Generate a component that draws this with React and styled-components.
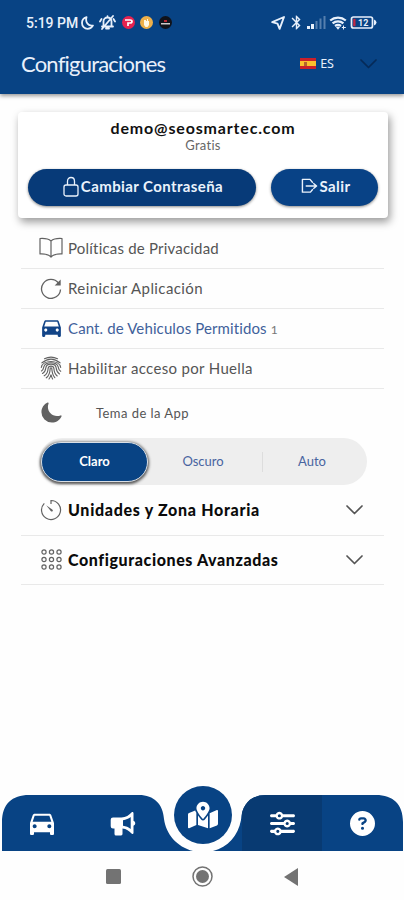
import React from 'react';
import styled, { createGlobalStyle, css } from 'styled-components';
import { MdBluetooth, MdDirectionsCar } from 'react-icons/md';
import { FaMapMarkedAlt } from 'react-icons/fa';
import { FaSliders, FaCircleQuestion } from 'react-icons/fa6';
import { IoMoon } from 'react-icons/io5';

const GlobalStyle = createGlobalStyle`
* { box-sizing: border-box; }
body {
    margin: 0;
    background: #fefefe;
    font-family: Lato, sans-serif;
    font-variant-ligatures: none;
}
button { font-family: inherit; border: 0; padding: 0; background: none; }
svg { display: block; flex-shrink: 0; }
`

const Phone = styled.div`
width:404px;
height:900px;
display:flex;
flex-direction:column;
overflow:hidden;
`

const Header = styled.header`
height:94px;
flex-shrink:0;
padding-top:12px;
background:#084384;
color:#e8f0fb;
box-shadow:0 2px 4px #0006;
`

const StatusBar = styled.div`
height:21px;
padding:0 27px 0 26px;
display:flex;
align-items:center;
justify-content:space-between;
font-family:Roboto, sans-serif;
font-size:14px;
font-weight:500;
`

const StatusGroup = styled.div`
display:flex;
align-items:center;
gap:${props => props.gap}px;
`

const Clock = styled.span`
width:53px;
white-space:nowrap;
`

const Dot = styled.span`
width:13px;
height:13px;
border-radius:50%;
display:flex;
align-items:center;
justify-content:center;
background:${props => props.color};
margin-left:${props => props.gap || 0}px;
`

const TitleBar = styled.div`
height:61px;
padding:0 27px 0 21px;
display:flex;
align-items:center;
`

const Title = styled.h1`
margin:0;
flex:1;
font-size:22px;
font-weight:400;
line-height:28px;
letter-spacing:-.8px;
`

const Language = styled.div`
display:flex;
align-items:center;
gap:4px;
font-family:"Noto Sans", sans-serif;
font-size:12.5px;
margin-right:26px;
`

const Flag = styled.span`
width:16px;
height:11px;
background:linear-gradient(#c9202b 26%, #fbc02d 26%, #fbc02d 74%, #c9202b 74%);
display:flex;
align-items:center;
padding-left:4px;
&::after {
    content:"";
    width:3px;
    height:4px;
    background:#b5622b;
}
`

const Card = styled.section`
height:106px;
flex-shrink:0;
margin:18px 16px 10px 18px;
padding:6px 10px 0;
border-radius:4px;
background:#fff;
box-shadow:2px 4px 9px #0006;
text-align:center;
`

const Email = styled.div`
font-size:16px;
font-weight:700;
line-height:20px;
color:#111;
letter-spacing:.84px;
`

const Plan = styled.div`
font-size:13px;
line-height:14px;
color:#666;
letter-spacing:.3px;
`

const Actions = styled.div`
display:flex;
gap:15px;
margin-top:17px;
`

const Action = styled.button`
width:${props => props.width}px;
height:37px;
border-radius:19px;
background:${props => props.tone};
box-shadow:0 1px 3px #0007;
color:#eaf2fc;
display:flex;
align-items:center;
justify-content:center;
gap:2px;
padding:0 0 3px 2px;
font-size:15px;
font-weight:700;
white-space:nowrap;
letter-spacing:.4px;
`

const Row = styled.div`
height:${props => props.height}px;
flex-shrink:0;
margin:0 20px 0 21px;
padding-left:18px;
display:flex;
align-items:center;
gap:5px;
color:${props => props.blue ? "#41619b" : "#555"};
font-size:15px;
border-bottom:1px solid ${props => props.plain ? "transparent" : "#e9e9e9"};
padding-bottom:${props => props.lift || 0}px;
`

const RowIcon = styled.span`
width:24px;
display:flex;
justify-content:center;
color:${props => props.blue ? "#124487" : "#626262"};
`

const Label = styled.span`
flex:1;
white-space:nowrap;
letter-spacing:${props => props.spacing || 0}px;
${props => props.bold && css`
    color:#0b0b0b;
    font-size:16px;
    font-weight:900;
`}
${props => props.theming && css`
    margin-left:28px;
    font-size:13px;
`}
`

const Count = styled.small`
font-size:12px;
color:#777;
`

const Chevron = styled.span`
margin-right:21px;
color:#555;
`

const Segments = styled.div`
height:47px;
flex-shrink:0;
margin:0 37px 0 39px;
padding:3px 2px;
border-radius:24px;
background:#eee;
display:flex;
align-items:center;
`

const Segment = styled.button`
width:${props => props.width}px;
height:20px;
padding:0 4px 1px 0;
font-size:13px;
color:#4864a0;
${props => props.divided && css`
    border-right:1px solid #ddd;
`}
${props => props.active && css`
    height:40px;
    padding:0 0 2px;
    border-radius:20px;
    background:#084384;
    color:#fff;
    font-weight:700;
    border:1px solid #d9dfe6;
    box-shadow:0 1px 3px 1px #000a;
`}
`

const Dock = styled.nav`
height:56px;
flex-shrink:0;
margin-top:auto;
position:relative;
`

/* the two wings curve away from the round map button */
const DockBar = styled.div`
height:56px;
padding:0 2px;
display:grid;
grid-template-columns:80px 82px 78px 80px 80px;
background:#084384;
color:#fff;
clip-path:path("M2 56V27C2 9 12 0 29 0H139C154 0 163 9 164 24C166 39 177 52 193 56ZM403 56V27C403 9 393 0 376 0H266C251 0 242 9 241 25C238 41 228 52 213 56Z");
`

const Tab = styled.button`
display:flex;
align-items:center;
justify-content:center;
color:#fff;
background:${props => props.active ? "#083a72" : "transparent"};
`

const MapButton = styled.button`
position:absolute;
left:174px;
top:-9px;
width:58px;
height:58px;
border-radius:50%;
background:#084384;
color:#fff;
display:flex;
align-items:center;
justify-content:center;
`

const SystemBar = styled.div`
height:49px;
flex-shrink:0;
padding:2px 106px 0;
display:flex;
align-items:center;
justify-content:space-between;
color:#737373;
`

const StatusMoon = () => (
    <svg width="13" height="14" viewBox="0 0 13 14" fill="none" stroke="currentColor" strokeWidth="1.8" strokeLinejoin="round">
        <path d="M5.5 1.2C2.6 2 1 4.3 1 7c0 3.300 2.500 5.800 5.600 5.800 2.300 0 4.200-1.200 5.300-3.200C7.500 10.400 4 6.500 5.500 1.200Z" />
    </svg>
);

const BellMuted = () => (
    <svg width="17" height="15" viewBox="0 0 17 15" fill="none" stroke="currentColor" strokeWidth="1.800" strokeLinecap="round">
        <path d="M4.500 11V6.500a4 4 0 0 1 8 0V11M3 11.500h11M7 13.500h3M8.500 1.200v1M2.500 4 1 6.500M14.500 4 16 6.500M14 1 3 14" />
    </svg>
);

const LocationArrow = () => (
    <svg width="14" height="14" viewBox="0 0 14 14" fill="none" stroke="currentColor" strokeWidth="1.900" strokeLinejoin="round">
        <path d="M13 1 8.600 12.800 6.500 7.700 1.200 6.200Z" />
    </svg>
);

const Signal = () => (
    <svg width="19" height="13" viewBox="0 0 19 13" fill="currentColor">
        <path d="M0 10h3v3H0zM4 8h3v5H4z" />
        <path d="M8.500 5h2v8h-2zM12.500 2.500h2V13h-2zM16.500 0h2v13h-2z" opacity=".35" />
    </svg>
);

const Wifi = () => (
    <svg width="19" height="14" viewBox="0 0 19 14" fill="none" stroke="currentColor" strokeWidth="2.200">
        <path d="M1.200 4.500a12 12 0 0 1 15.600 0M3.600 7.300a8.300 8.300 0 0 1 10.800 0M6 10a5 5 0 0 1 6 0" />
        <path d="m7 11.300 2 2.400 2-2.400a3.500 3.500 0 0 0-4 0Z" fill="currentColor" stroke="none" />
        <path d="M14.500 9.500v4M12.800 11.500h4" strokeWidth="1" />
    </svg>
);

const Battery = () => (
    <svg width="27" height="13" viewBox="0 0 27 13">
        <path d="M3.500 1h17q2 0 2 2v7q0 2-2 2h-17q-2 0-2-2V3q0-2 2-2Z" fill="none" stroke="currentColor" strokeWidth="1.700" />
        <path d="M24 3.500q2.500 1 2.500 3t-2.500 3Z" fill="currentColor" />
        <path d="M3.200 2.800h2.300v7.400H3.200z" fill="#c22843" />
        <text x="8" y="9.800" fill="currentColor" fontFamily="Roboto, sans-serif" fontSize="9" fontWeight="700">12</text>
    </svg>
);

const Lock = () => (
    <svg width="16" height="21" viewBox="0 0 16 21" fill="none" stroke="currentColor" strokeWidth="1.300">
        <rect x="1" y="9" width="14" height="11" rx="2" />
        <path d="M4.500 9V5.300C4.500 3 6 1.500 8 1.500s3.500 1.500 3.500 3.800V9" />
    </svg>
);

const Exit = () => (
    <svg width="17" height="16" viewBox="0 0 18 16" fill="none" stroke="currentColor" strokeWidth="1.500" strokeLinejoin="round">
        <path d="M12.500 4.500 9.500 1H1.500v13.500h8.500l2.500-3M5 8h11M13 5l3.500 3-3.500 3" />
    </svg>
);

const Book = () => (
    <svg width="24" height="21" viewBox="0 0 24 21" fill="none" stroke="currentColor" strokeWidth="1.200" strokeLinejoin="round">
        <path d="M12 4C9.500 1.800 5.500 1.200 1 1.500v15.500c4.500-.2 8.500.5 11 3 2.500-2.500 6.500-3.200 11-3V1.500C18.500 1.200 14.500 1.800 12 4ZM12 4v16" />
    </svg>
);

const Restart = () => (
    <svg width="22" height="22" viewBox="0 0 22 22" fill="none" stroke="currentColor" strokeWidth="1.300">
        <path d="M18.500 6A9.500 9.500 0 1 0 20.500 12.500" />
        <path d="M20.700 2.500v6h-6Z" fill="currentColor" stroke="none" />
    </svg>
);

const Fingerprint = () => (
    <svg width="22" height="24" viewBox="0 0 22 24" fill="none" stroke="currentColor" strokeWidth="1.150" strokeLinecap="round">
        <path d="M4.500 2.700q6.500-3.200 13 0M2 6.800q9-7.300 18 0M1.300 11.500C2.500 3.500 19.500 3.500 20.700 11.500" />
        <path d="M1.500 15c2-1 1.800-2.500 2.300-4.200 1.700-5.400 12.700-5.400 14.400 0 .6 2 .2 3.200 2.500 4.500" />
        <path d="M2.500 17.500c2.500-1.200 3-3 3.300-5.500.5-5.200 9.900-5.200 10.400 0 .2 2.500 1 4.500 3.300 6" />
        <path d="M4.200 19.800c2.700-1.400 3.700-4 3.900-7.300.3-3.200 5.500-3.200 5.800 0 .2 3.300 1.200 5.800 3.300 7.500" />
        <path d="M6.300 21.800c2.700-1.900 3.600-4.300 3.900-9.300q.8-1.200 1.600 0c.2 4 .9 6.700 3 9.200M9 23c1-1.200 1.600-2.600 2-4.500.4 1.800.8 3 1.600 4.500" />
    </svg>
);

const Timer = () => (
    <svg width="22" height="22" viewBox="0 0 22 22" fill="none" stroke="currentColor" strokeWidth="1.200">
        <path d="M11 5V1.500A9.500 9.500 0 1 1 4.300 4.300" />
        <path d="m6.200 6.200 6 4.200c.8.700.8 1.300.3 1.800s-1.200.3-1.800-.3Z" fill="currentColor" stroke="none" />
    </svg>
);

const Dots = () => (
    <svg width="21" height="21" viewBox="0 0 21 21" fill="none" stroke="currentColor" strokeWidth="1.200">
        {[3, 10.5, 18].map(y => [3, 10.5, 18].map(x => (
            <circle key={`${x}-${y}`} cx={x} cy={y} r="2.100" />
        )))}
    </svg>
);

const Down = () => (
    <svg width="17" height="10" viewBox="0 0 17 10" fill="none" stroke="currentColor" strokeWidth="1.700" strokeLinecap="round" strokeLinejoin="round">
        <path d="m1 1 7.500 7.500L16 1" />
    </svg>
);

const Megaphone = () => (
    <svg width="26" height="25" viewBox="0 0 26 25" fill="currentColor">
        <path fillRule="evenodd" d="M3 6.500h8.500c4.300 0 7.700-2.500 10-5 .8-.8 2-.3 2 .8v7.500q1.800.7 1.800 2.500t-1.800 2.500v7c0 1.200-1.200 1.600-2 .8-2.300-2.700-5.200-4.600-9-5v5.500q0 1.400-1.400 1.400H6q-1.500 0-1.500-1.500v-5.500H3q-2.300 0-2.300-2.300V8.800Q.7 6.500 3 6.500ZM20.700 6c-2.200 1.700-4.700 2.900-7.700 3.200v5.500c3 .3 5.500 1.500 7.700 3.200Z" />
    </svg>
);

const HeaderChevron = styled.span`
color:#062a57;
`

export default function App() {
    return (
        <Phone>
            <GlobalStyle />
            <Header>
                <StatusBar>
                    <StatusGroup gap={5}>
                        <StatusGroup gap={2}>
                            <Clock>5:19 PM</Clock>
                            <StatusMoon />
                        </StatusGroup>
                        <BellMuted />
                        <Dot color="#e62250" gap={1}>
                            <svg width="9" height="9" viewBox="0 0 9 9" fill="none" stroke="#fff" strokeWidth="1.700">
                                <path d="M1 2h5q2 0 2 1.500T6 5H4v3" />
                            </svg>
                        </Dot>
                        <Dot color="#eeb04a">
                            <svg width="7" height="8" viewBox="0 0 7 8" fill="#fff8e6">
                                <path d="M1 1h2v1h1V0h1v2h1v4L4.500 8h-2L1 6Z" />
                            </svg>
                        </Dot>
                        <Dot color="#10131b" gap={1}>
                            <svg width="9" height="6" viewBox="0 0 9 6">
                                <path d="M3 0h3v2H3z" fill="#b92632" />
                                <path d="M0 3h9v1.500H0z" fill="#ccc" />
                            </svg>
                        </Dot>
                    </StatusGroup>
                    <StatusGroup gap={2.5}>
                        <LocationArrow />
                        <MdBluetooth size={17} />
                        <Signal />
                        <Wifi />
                        <Battery />
                    </StatusGroup>
                </StatusBar>
                <TitleBar>
                    <Title>Configuraciones</Title>
                    <Language><Flag />ES</Language>
                    <HeaderChevron><Down /></HeaderChevron>
                </TitleBar>
            </Header>
            <Card>
                <Email>demo@seosmartec.com</Email>
                <Plan>Gratis</Plan>
                <Actions>
                    <Action width={228} tone="#073a78"><Lock />Cambiar Contraseña</Action>
                    <Action width={107} tone="#084286"><Exit />Salir</Action>
                </Actions>
            </Card>
            <Row height={41} lift={1}>
                <RowIcon><Book /></RowIcon>
                <Label spacing={.2}>Políticas de Privacidad</Label>
            </Row>
            <Row height={40} lift={2}>
                <RowIcon><Restart /></RowIcon>
                <Label spacing={.4}>Reiniciar Aplicación</Label>
            </Row>
            <Row height={40} lift={2} blue>
                <RowIcon blue><MdDirectionsCar size={25} /></RowIcon>
                <Label spacing={.12}>Cant. de Vehiculos Permitidos <Count>1</Count></Label>
            </Row>
            <Row height={40} lift={2}>
                <RowIcon><Fingerprint /></RowIcon>
                <Label spacing={.33}>Habilitar acceso por Huella</Label>
            </Row>
            <Row height={49} lift={1} plain>
                <RowIcon><IoMoon size={23} /></RowIcon>
                <Label theming spacing={.45}>Tema de la App</Label>
            </Row>
            <Segments>
                <Segment width={107} active>Claro</Segment>
                <Segment width={115} divided>Oscuro</Segment>
                <Segment width={102}>Auto</Segment>
            </Segments>
            <Row height={51} lift={1}>
                <RowIcon><Timer /></RowIcon>
                <Label bold spacing={.7}>Unidades y Zona Horaria</Label>
                <Chevron><Down /></Chevron>
            </Row>
            <Row height={49} lift={1}>
                <RowIcon><Dots /></RowIcon>
                <Label bold spacing={.6}>Configuraciones Avanzadas</Label>
                <Chevron><Down /></Chevron>
            </Row>
            <Dock>
                <DockBar>
                    <Tab><MdDirectionsCar size={32} /></Tab>
                    <Tab><Megaphone /></Tab>
                    <span />
                    <Tab active><FaSliders size={25} /></Tab>
                    <Tab><FaCircleQuestion size={25} /></Tab>
                </DockBar>
                <MapButton><FaMapMarkedAlt size={30} /></MapButton>
            </Dock>
            <SystemBar>
                <svg width="15" height="15" viewBox="0 0 15 15" fill="currentColor"><rect width="15" height="15" rx="1.500" /></svg>
                <svg width="21" height="21" viewBox="0 0 21 21" fill="none" stroke="currentColor" strokeWidth="1.500">
                    <circle cx="10.500" cy="10.500" r="9.500" />
                    <circle cx="10.500" cy="10.500" r="6.500" fill="currentColor" stroke="none" />
                </svg>
                <svg width="14" height="18" viewBox="0 0 14 18" fill="currentColor"><path d="M14 0v18L0 9Z" /></svg>
            </SystemBar>
        </Phone>
    );
}
